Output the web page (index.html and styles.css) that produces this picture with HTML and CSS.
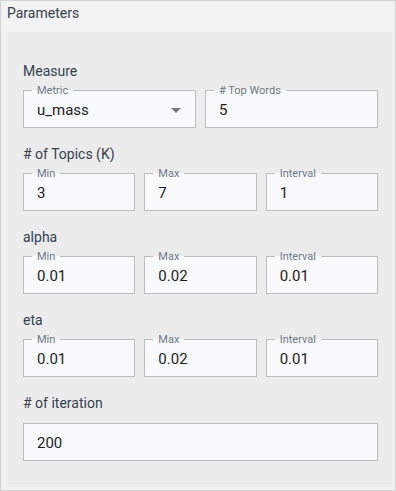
FILE: index.html
```html
<!DOCTYPE html>
<html>
<head>
  <title>Parameters</title>
  <link rel="stylesheet" href="styles.css">
</head>
<body>
  <div class="card">
    <div class="card-head">Parameters</div>

    <div class="card-body">
      <div class="group">
        <div class="group-label">Measure</div>
        <div class="row two">
          <fieldset class="field">
            <legend>Metric</legend>
            <div class="control">
              <select class="select">
                <option>u_mass</option>
                <option>c_v</option>
                <option>c_uci</option>
                <option>c_npmi</option>
              </select>
              <svg class="caret" width="10" height="5" viewBox="0 0 10 5"><polygon points="0,0 10,0 5,5" fill="#757575"/></svg>
            </div>
          </fieldset>
          <fieldset class="field">
            <legend># Top Words</legend>
            <div class="control"><input type="text" value="5"></div>
          </fieldset>
        </div>
      </div>

      <div class="group">
        <div class="group-label"># of Topics (K)</div>
        <div class="row three">
          <fieldset class="field">
            <legend>Min</legend>
            <div class="control"><input type="text" value="3"></div>
          </fieldset>
          <fieldset class="field">
            <legend>Max</legend>
            <div class="control"><input type="text" value="7"></div>
          </fieldset>
          <fieldset class="field">
            <legend>Interval</legend>
            <div class="control"><input type="text" value="1"></div>
          </fieldset>
        </div>
      </div>

      <div class="group">
        <div class="group-label">alpha</div>
        <div class="row three">
          <fieldset class="field">
            <legend>Min</legend>
            <div class="control"><input type="text" value="0.01"></div>
          </fieldset>
          <fieldset class="field">
            <legend>Max</legend>
            <div class="control"><input type="text" value="0.02"></div>
          </fieldset>
          <fieldset class="field">
            <legend>Interval</legend>
            <div class="control"><input type="text" value="0.01"></div>
          </fieldset>
        </div>
      </div>

      <div class="group">
        <div class="group-label">eta</div>
        <div class="row three">
          <fieldset class="field">
            <legend>Min</legend>
            <div class="control"><input type="text" value="0.01"></div>
          </fieldset>
          <fieldset class="field">
            <legend>Max</legend>
            <div class="control"><input type="text" value="0.02"></div>
          </fieldset>
          <fieldset class="field">
            <legend>Interval</legend>
            <div class="control"><input type="text" value="0.01"></div>
          </fieldset>
        </div>
      </div>

      <div class="group">
        <div class="group-label"># of iteration</div>
        <div class="row one">
          <fieldset class="field plain">
            <div class="control"><input type="text" value="200"></div>
          </fieldset>
        </div>
      </div>
    </div>
  </div>
</body>
</html>
```

FILE: styles.css
```css
body {
  margin: 0;
  font-family: Roboto, "Liberation Sans", Arial, sans-serif;
}

.card {
  width: 396px;
  height: 491px;
  box-sizing: border-box;
  border: 1px solid #d3d3d3;
  background-color: #f2f2f2;
}

.card-head {
  height: 31px;
  box-sizing: border-box;
  padding: 2px 6px 0;
  font-size: 14px;
  line-height: 20px;
  color: #36404e;
}

.card-body {
  margin: 0 2px 0 6px;
  padding: 29px 15px 26px 16px;
  background-color: #ececec;
}

.group {
  margin-bottom: 16px;
}

.group:last-child {
  margin-bottom: 0;
}

.group-label {
  font-size: 14px;
  line-height: 20px;
  color: #36404e;
  margin-bottom: 3px;
}

.row {
  display: grid;
  gap: 9px;
}

.row.one {
  grid-template-columns: 1fr;
}

.row.two {
  grid-template-columns: 1fr 1fr;
}

.row.three {
  grid-template-columns: 1fr 1fr 1fr;
}

.field {
  margin: 0;
  padding: 0 8px;
  min-width: 0;
  border: 1px solid #bdbdbd;
  background-color: #f8f9fb;
}

.field legend {
  padding: 0 5px;
  font-size: 11px;
  line-height: 13px;
  color: #6e7a88;
}

.field.plain {
  margin-top: 7px;
  padding-top: 6px;
}

.control {
  display: flex;
  align-items: center;
  height: 30px;
  box-sizing: border-box;
  padding-bottom: 4px;
}

.control input,
.control select {
  flex: 1;
  min-width: 0;
  border: none;
  outline: none;
  background: transparent;
  padding: 0 5px;
  margin: 0;
  font-family: Roboto, "Liberation Sans", Arial, sans-serif;
  font-size: 15px;
  color: #1e1e1e;
}

.control select {
  appearance: none;
  -webkit-appearance: none;
}

.caret {
  flex: none;
  margin-right: 6px;
}
```
